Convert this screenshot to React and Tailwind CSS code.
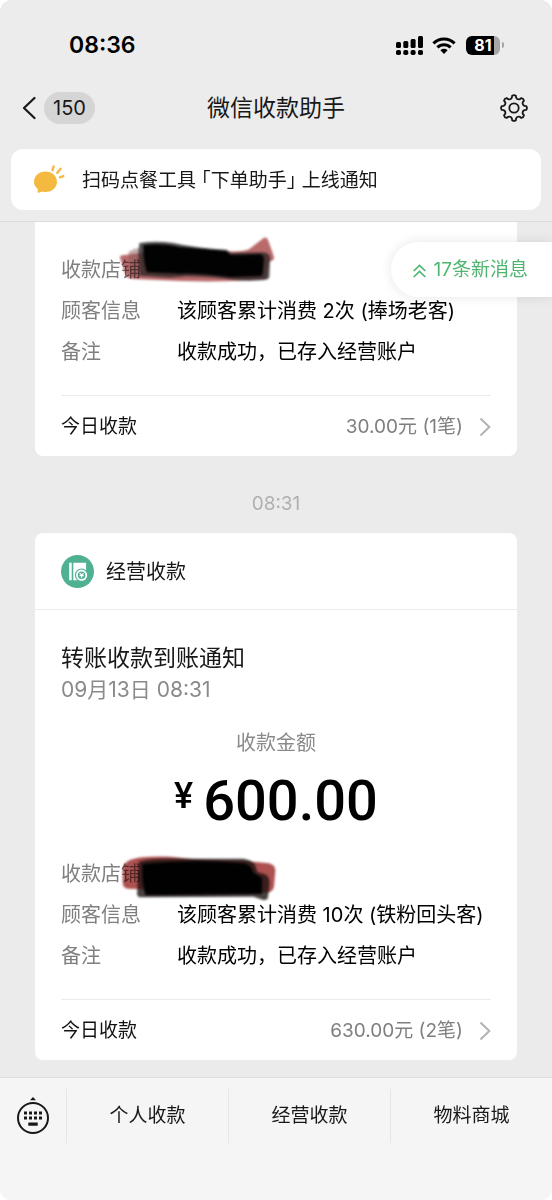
import React from 'react';

const menuItems = ['个人收款', '经营收款', '物料商城'];

// Outline of the settings gear, eight teeth around a 28x28 box
const gearPath = (() => {
  const point = (r, a) => `${(14 + r * Math.cos(a)).toFixed(2)} ${(14 + r * Math.sin(a)).toFixed(2)}`;
  const step = Math.PI / 4;
  let d = '';
  for (let i = 0; i < 8; i++) {
    const a = i * step;
    d += `${i === 0 ? 'M' : 'L'}${point(10.6, a - 0.2)} L${point(12.4, a - 0.15)} Q${point(13.6, a)} ${point(12.4, a + 0.15)} L${point(10.6, a + 0.2)} `;
    d += `Q${point(8.6, a + step / 2)} ${point(10.6, a + step - 0.2)} `;
  }
  return d + 'Z';
})();

const SignalIcon = () => (
  <svg className="h-[19px] w-7" viewBox="0 0 28 19" fill="black" aria-hidden="true">
    <rect x="0" y="6" width="5" height="6" rx="1.5" />
    <rect x="7.3" y="5" width="5" height="7" rx="1.5" />
    <rect x="14.6" y="3" width="5" height="9" rx="1.5" />
    <rect x="22" y="0" width="5" height="12" rx="1.5" />
    <rect x="0" y="14" width="5" height="5" rx="1.8" />
    <rect x="7.3" y="14" width="5" height="5" rx="1.8" />
    <rect x="14.6" y="14" width="5" height="5" rx="1.8" />
    <rect x="22" y="14" width="5" height="5" rx="1.8" />
  </svg>
);

const WifiIcon = () => (
  <svg className="h-[17px] w-6" viewBox="0 0 24 17" fill="none" stroke="black" strokeWidth="3" aria-hidden="true">
    <path d="M1.4 6.3a15.2 15.2 0 0 1 21.2 0" />
    <path d="M5.4 10.4a9.4 9.4 0 0 1 13.2 0" />
    <path d="M12 17l-3.6-3.7a5.2 5.2 0 0 1 7.2 0z" fill="black" stroke="none" />
  </svg>
);

const GearIcon = () => (
  <svg className="h-7 w-7" viewBox="0 0 28 28" fill="none" stroke="#181818" strokeWidth="1.8" strokeLinejoin="round" aria-hidden="true">
    <path d={gearPath} />
    <circle cx="14" cy="14" r="4.7" />
  </svg>
);

const MessageIcon = () => (
  <svg className="h-[30px] w-8" viewBox="0 0 32 30" fill="#f4b93f" aria-hidden="true">
    <path d="M12.5 6.5C19 6.5 24 11 24 16.8S19 27 12.5 27q-1.8 0-3.5-.5L6 27.7q-1.5.5-1.4-1L4.8 24Q1 21.3 1 16.8C1 11 6 6.5 12.5 6.5z" />
    <g stroke="#f4b93f" strokeWidth="2.4" strokeLinecap="round">
      <path d="M19.5 5.2l1.1-3.7M24.3 7.8l3.3-4M27 12.3l3.3-1.2" />
    </g>
  </svg>
);

const LedgerIcon = () => (
  <svg className="h-[33px] w-[33px]" viewBox="0 0 33 33" aria-hidden="true">
    <circle cx="16.5" cy="16.5" r="16.5" fill="#50b192" />
    <path d="M8.2 7.7h2.5v17.6H8.2zM12.3 7.7h12.8v17.6H12.3z" fill="white" />
    <circle cx="20.6" cy="20.2" r="6.7" fill="#50b192" />
    <circle cx="20.6" cy="20.2" r="4.7" fill="none" stroke="white" strokeWidth="1.8" />
    <path d="M18.7 18.2l1.9 2 1.9-2M18.5 20.6h4.2M20.6 20.2v2.6" fill="none" stroke="white" strokeWidth="1.2" />
  </svg>
);

const KeyboardIcon = () => (
  <svg className="h-[38px] w-8" viewBox="0 0 32 38" fill="#181818" aria-hidden="true">
    <path d="M16 0l3 3.2h-6z" />
    <circle cx="16" cy="21" r="15" fill="none" stroke="#181818" strokeWidth="2" />
    <path d="M7 14.5h3v3H7zM12 14.5h3v3h-3zM17 14.5h3v3h-3zM22 14.5h3v3h-3zM7 19.5h3v3H7zM12 19.5h3v3h-3zM17 19.5h3v3h-3zM22 19.5h3v3h-3zM11.3 25.5h9.4v3.2h-9.4z" />
  </svg>
);

// Marker strokes that hide the shop name
const scribbles = {
  first: (
    <svg className="absolute -top-[18px] left-14 h-[52px] w-40 overflow-visible mix-blend-multiply" viewBox="261 51 480 156" aria-hidden="true">
      <g className="blur-[3px]">
        <path d="M270 128Q268 120 284 120L330 114L580 108Q640 112 658 102L700 70Q708 64 714 74L732 126Q734 136 718 140L708 192Q600 202 450 198L310 192Q290 190 286 176Z" fill="#b96a6b" />
        <path d="M296 110Q312 100 330 98V190L306 186Q294 150 296 110Z" fill="#8a5a5a" opacity="0.5" />
        <path d="M328 84Q380 76 430 84Q500 100 590 104L602 114L700 112Q720 114 720 130L718 186Q716 196 690 196Q660 198 620 196Q560 186 470 184L420 188L330 182Q322 130 328 84Z" fill="#2a2626" opacity="0.8" />
        <path d="M340 90Q400 84 450 96L588 108L602 120L690 118Q702 120 702 135L698 176Q696 184 680 184L600 186Q500 174 450 176L350 172Q338 130 340 90Z" fill="#030202" />
      </g>
    </svg>
  ),
  second: (
    <svg className="absolute -top-[2px] left-14 h-[52px] w-40 overflow-visible mix-blend-multiply" viewBox="261 36 480 156" aria-hidden="true">
      <g className="blur-[3px]">
        <path d="M278 92Q276 70 300 60Q330 48 420 50Q520 62 640 62L716 70Q736 74 736 92L732 140Q730 154 712 158L330 148L296 146Q278 144 278 128Z" fill="#ad5150" />
        <path d="M326 66Q350 54 480 56L640 56Q668 60 676 76L682 96L708 104Q720 110 718 136L714 172Q712 182 700 180L670 170L330 172Q318 172 322 150Z" fill="#1c1110" opacity="0.8" />
        <path d="M338 72Q500 56 640 70Q664 74 670 98L696 114V162L346 166Q334 120 338 72Z" fill="#020101" />
      </g>
    </svg>
  ),
};

const DetailList = ({ customer, scribble }) => (
  <dl className="relative text-[20px] leading-[41px] text-[#7f7f7f]">
    <div className="flex">
      <dt className="w-29 shrink-0">收款店铺</dt>
      <dd aria-hidden="true">{scribbles[scribble]}</dd>
    </div>
    <div className="flex">
      <dt className="w-29 shrink-0">顾客信息</dt>
      <dd className="whitespace-nowrap text-black">{customer}</dd>
    </div>
    <div className="flex">
      <dt className="w-29 shrink-0">备注</dt>
      <dd className="whitespace-nowrap text-black">收款成功，已存入经营账户</dd>
    </div>
  </dl>
);

const TodayLink = ({ total }) => (
  <a href="#today" className="mt-[22px] flex h-[61px] items-center border-t border-[#ebebeb] pt-[2px] text-[19px]">
    <span className="text-[#111]">今日收款</span>
    <span className="ml-auto text-[#7f7f7f]">{total}</span>
    <svg className="ml-4 h-5 w-3" viewBox="0 0 12 20" fill="none" stroke="#b2b2b2" strokeWidth="2" aria-hidden="true">
      <path d="M1.5 1.5L10.3 10l-8.8 8.5" />
    </svg>
  </a>
);

const App = () => {
  return (
    <div className="flex min-h-screen flex-col overflow-hidden rounded-xl bg-[#ebebeb] font-[Inter,'Noto_Sans_CJK_SC',sans-serif] text-[#181818]">
      <header className="border-b border-[#dcdcdc] bg-[#ececec] pb-[11px]">
        <div className="flex h-[90px] items-center pr-12 pl-[69px]">
          <time className="text-[23px] font-semibold text-black">08:36</time>
          <div className="ml-auto flex items-center gap-2">
            <SignalIcon />
            <WifiIcon />
            <div className="ml-[2px] flex items-center gap-[2px]">
              <div className="flex h-[19px] w-[34px] items-center justify-center rounded-md bg-linear-to-r from-black from-82% to-[#a6a6a6] to-82% text-[16px] font-bold text-white">
                81
              </div>
              <div className="h-[6px] w-[2px] rounded-r-full bg-[#a6a6a6]"></div>
            </div>
          </div>
        </div>

        <div className="grid h-9 grid-cols-[1fr_auto_1fr] items-center px-[22px]">
          <button type="button" className="flex items-center gap-2" aria-label="返回">
            <svg className="h-6 w-[14px]" viewBox="0 0 14 24" fill="none" stroke="#181818" strokeWidth="2.2" strokeLinecap="round" strokeLinejoin="round" aria-hidden="true">
              <path d="M12.5 2L2 12l10.5 10" />
            </svg>
            <span className="rounded-full bg-[#d5d5d5] px-[9px] text-[20px] leading-8">150</span>
          </button>
          <h1 className="text-[23px]">微信收款助手</h1>
          <button type="button" className="justify-self-end pr-[2px]" aria-label="设置">
            <GearIcon />
          </button>
        </div>

        <a href="#notice" className="mx-[11px] mt-[23px] flex h-[61px] items-center gap-[17px] rounded-xl bg-white pl-[22px] text-[19px]">
          <MessageIcon />
          <span className="pt-1 [font-feature-settings:'halt']">扫码点餐工具 「下单助手」 上线通知</span>
        </a>
      </header>

      <main className="relative flex-1 px-[35px] pb-[17px]">
        <button type="button" className="absolute top-5 right-0 z-10 flex h-[55px] items-center gap-2 rounded-l-full bg-white pt-[2px] pr-6 pl-[22px] text-[19px] text-[#4fb571] shadow-[0_0_12px_rgba(0,0,0,0.1)]">
          <svg className="h-[14px] w-[13px]" viewBox="0 0 13 14" fill="none" stroke="#4fb571" strokeWidth="1.7" aria-hidden="true">
            <path d="M.7 7L6.5 1.5 12.3 7M.7 13l5.8-5.5 5.8 5.5" />
          </svg>
          17条新消息
        </button>

        <article className="rounded-b-lg bg-white px-[26px] pt-7">
          <DetailList customer="该顾客累计消费 2次 (捧场老客)" scribble="first" />
          <TodayLink total="30.00元 (1笔)" />
        </article>

        <p className="pt-9 pb-[17px] text-center text-[19px] leading-6 text-[#b0b0b0]">08:31</p>

        <article className="rounded-lg bg-white">
          <div className="flex h-[77px] items-center gap-3 border-b border-[#ebebeb] px-[26px]">
            <LedgerIcon />
            <h2 className="pt-[2px] text-[20px]">经营收款</h2>
          </div>
          <div className="px-[26px] pt-8">
            <h3 className="text-[23px] leading-8">转账收款到账通知</h3>
            <p className="text-[21px] leading-8 text-[#8a8a8a]">09月13日 08:31</p>
            <p className="mt-[25px] text-center text-[20px] leading-6 text-[#8a8a8a]">收款金额</p>
            <p className="mt-[18px] mb-[25px] flex items-start justify-center gap-[10px] font-[Roboto,sans-serif] font-medium text-black">
              <span className="text-[36px] leading-[46px]">¥</span>
              <span className="text-[56px] leading-[56px]">600.00</span>
            </p>
            <DetailList customer="该顾客累计消费 10次 (铁粉回头客)" scribble="second" />
            <TodayLink total="630.00元 (2笔)" />
          </div>
        </article>
      </main>

      <footer className="border-t border-[#dedede] bg-[#f5f5f5] pb-[46px]">
        <nav className="flex h-[76px] items-center">
          <button type="button" className="flex w-[66px] shrink-0 justify-center" aria-label="键盘">
            <KeyboardIcon />
          </button>
          {menuItems.map((item) => (
            <button key={item} type="button" className="h-[54px] flex-1 border-l border-[#e6e6e6] text-[19px]">
              {item}
            </button>
          ))}
        </nav>
      </footer>
    </div>
  );
};

export default App;
